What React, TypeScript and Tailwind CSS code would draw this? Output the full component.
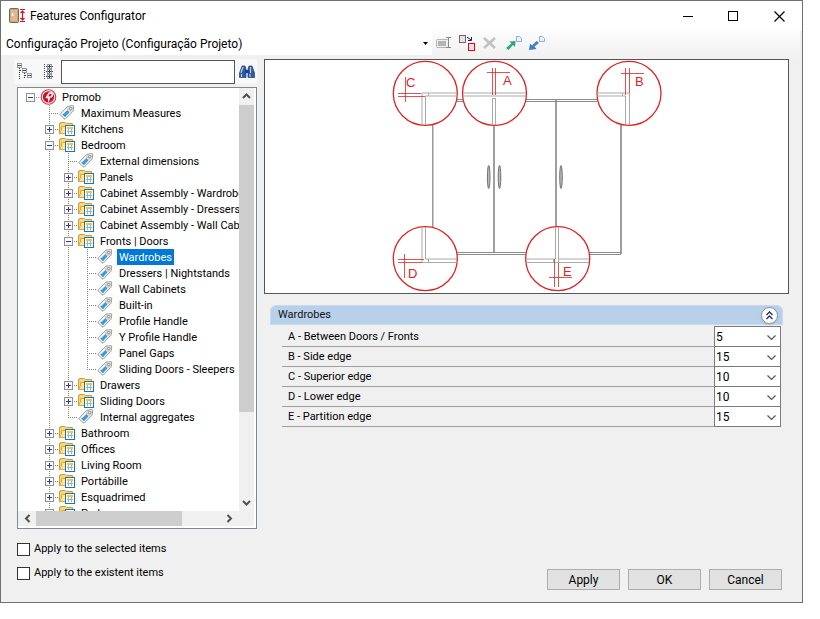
import { useState } from 'react';
import type { ReactNode } from 'react';

type NodeKind = 'root' | 'tag' | 'folder';

interface TreeRow {
  depth: number;
  label: string;
  kind: NodeKind;
  open?: boolean;
}

const rows: TreeRow[] = [
  { depth: 0, label: 'Promob', kind: 'root', open: true },
  { depth: 1, label: 'Maximum Measures', kind: 'tag' },
  { depth: 1, label: 'Kitchens', kind: 'folder' },
  { depth: 1, label: 'Bedroom', kind: 'folder', open: true },
  { depth: 2, label: 'External dimensions', kind: 'tag' },
  { depth: 2, label: 'Panels', kind: 'folder' },
  { depth: 2, label: 'Cabinet Assembly - Wardrobes', kind: 'folder' },
  { depth: 2, label: 'Cabinet Assembly - Dressers | Nightstands', kind: 'folder' },
  { depth: 2, label: 'Cabinet Assembly - Wall Cabinets', kind: 'folder' },
  { depth: 2, label: 'Fronts | Doors', kind: 'folder', open: true },
  { depth: 3, label: 'Wardrobes', kind: 'tag' },
  { depth: 3, label: 'Dressers | Nightstands', kind: 'tag' },
  { depth: 3, label: 'Wall Cabinets', kind: 'tag' },
  { depth: 3, label: 'Built-in', kind: 'tag' },
  { depth: 3, label: 'Profile Handle', kind: 'tag' },
  { depth: 3, label: 'Y Profile Handle', kind: 'tag' },
  { depth: 3, label: 'Panel Gaps', kind: 'tag' },
  { depth: 3, label: 'Sliding Doors - Sleepers', kind: 'tag' },
  { depth: 2, label: 'Drawers', kind: 'folder' },
  { depth: 2, label: 'Sliding Doors', kind: 'folder' },
  { depth: 2, label: 'Internal aggregates', kind: 'tag' },
  { depth: 1, label: 'Bathroom', kind: 'folder' },
  { depth: 1, label: 'Offices', kind: 'folder' },
  { depth: 1, label: 'Living Room', kind: 'folder' },
  { depth: 1, label: 'Portábille', kind: 'folder' },
  { depth: 1, label: 'Esquadrimed', kind: 'folder' },
  { depth: 1, label: 'Parks', kind: 'folder' },
  { depth: 1, label: 'Others', kind: 'folder' },
];

const features = [
  { id: 'a', label: 'A - Between Doors / Fronts', value: '5' },
  { id: 'b', label: 'B - Side edge', value: '15' },
  { id: 'c', label: 'C - Superior edge', value: '10' },
  { id: 'd', label: 'D - Lower edge', value: '10' },
  { id: 'e', label: 'E - Partition edge', value: '15' },
];

// True when another row at this depth follows before the branch closes
function continues(index: number, depth: number) {
  for (let i = index + 1; i < rows.length; i++) {
    if (rows[i].depth < depth) return false;
    if (rows[i].depth === depth) return true;
  }
  return false;
}

function Guide({ index, level }: { index: number; level: number }) {
  const row = rows[index];
  const own = row.depth === level;
  const more = continues(index, level);
  return (
    <svg width="19" height="16" className="shrink-0" shapeRendering="crispEdges">
      {level > 0 && (own || more) && (
        <path d={`M9.5 0V${more ? 16 : 8}`} stroke="#808080" strokeDasharray="1 1" />
      )}
      {own && <path d="M9 8.5H19" stroke="#808080" strokeDasharray="1 1" />}
      {own && row.kind !== 'tag' && (
        <>
          <rect x="5.5" y="4.5" width="8" height="8" fill="#f8f8f8" stroke="#919191" />
          <path d={row.open ? 'M7 8.5H12' : 'M7 8.5H12M9.5 6V11'} stroke="#2b3f8c" />
        </>
      )}
    </svg>
  );
}

function NodeIcon({ kind }: { kind: NodeKind }) {
  if (kind === 'root') {
    return (
      <svg width="20" height="16" className="shrink-0">
        <circle cx="8.5" cy="8" r="7.3" fill="#fff" stroke="#d8303e" strokeWidth="1.1" />
        <circle cx="8.5" cy="8" r="5.7" fill="#cf1228" />
        <path d="M8 14V9.5L5.5 9L7 6L8.5 3.5L12 3.2L13.3 6L12 8.5L10 8.5L9.6 11Z" fill="#fff" />
        <path d="M8.2 7.6L9.4 4.8L11.6 5L11 7.2Z" fill="#cf1228" />
      </svg>
    );
  }
  if (kind === 'tag') {
    return (
      <svg width="20" height="16" className="shrink-0">
        <path d="M.8 9.6L8.6 1.4L13.6 .6Q14.8 .5 14.7 1.8L14 6.2L6 14.3Z" fill="#fff" stroke="#949494" />
        <path d="M9 2.2L14 1.4L13.3 5.800L11.300 7.800L7.400 4Z" fill="#d2d2d2" />
        <path d="M7.800 5.400L10.300 7.800L6.200 12L3.700 9.600Z" fill="#3a9fdb" />
        <path d="M3.700 9.300L6.200 11.800M8 5.400L10.300 7.600" stroke="#1b689f" strokeWidth=".8" />
        <circle cx="11.700" cy="3.600" r="1.200" fill="#fff" stroke="#777" strokeWidth=".8" />
      </svg>
    );
  }
  return (
    <svg width="20" height="16" className="shrink-0">
      <path d="M.5 12.500V2.500H1.500V1.500H6.500L7.500 2.500H13.500V12.500Z" fill="#fbd777" stroke="#d79a32" />
      <path d="M.5 12.500L2.500 9V5.500H7.500L8.500 4.500H14.500V12.500Z" fill="#ffe699" stroke="#dfa63f" />
      <rect x="6.500" y="4.500" width="9" height="10" fill="#fff" stroke="#147ab5" />
      <rect x="8" y="6" width="6" height="2" fill="#f5c34a" />
      <path d="M8 10.500H14M9.500 8V13M12.500 8V13" stroke="#8db6de" />
    </svg>
  );
}

function ScrollArrow({ d, label }: { d: string; label: string }) {
  return (
    <button aria-label={label} className="flex size-[17px] shrink-0 items-center justify-center">
      <svg width="9" height="9" fill="none" stroke="#505050" strokeWidth="2">
        <path d={d} />
      </svg>
    </button>
  );
}

function FeatureTree() {
  const [selected, setSelected] = useState('Wardrobes');

  return (
    <div className="flex min-h-0 flex-1 flex-col border border-[#828790] bg-white">
      <div className="flex min-h-0 flex-1">
        <div className="min-w-0 flex-1 overflow-hidden pt-px pl-[3px]">
          {rows.map((row, i) => (
            <div key={i} className="flex h-4 items-center">
              {Array.from({ length: row.depth + 1 }, (_, level) => (
                <Guide key={level} index={i} level={level} />
              ))}
              <NodeIcon kind={row.kind} />
              <button
                onClick={() => setSelected(row.label)}
                className={`h-4 shrink-0 px-0.5 pt-0.5 leading-[14px] whitespace-nowrap ${
                  selected === row.label ? 'bg-[#0078d7] text-white' : ''
                }`}
              >
                {row.label}
              </button>
            </div>
          ))}
        </div>
        <div className="mr-0.5 flex w-[15px] flex-col items-center bg-[#f0f0f0]">
          <ScrollArrow label="Scroll up" d="M1 6L4.5 2.5L8 6" />
          <div className="flex w-full flex-1 flex-col">
            <div className="h-[79%] bg-[#cdcdcd]" />
          </div>
          <ScrollArrow label="Scroll down" d="M1 3L4.5 6.5L8 3" />
        </div>
      </div>
      {/* Horizontal scrollbar */}
      <div className="mr-0.5 mb-0.5 flex h-[15px] items-center bg-[#f0f0f0] pr-4 pl-px">
        <ScrollArrow label="Scroll left" d="M6.5 1L3 4.5L6.5 8" />
        <div className="flex h-full flex-1">
          <div className="w-[79%] bg-[#cdcdcd]" />
        </div>
        <ScrollArrow label="Scroll right" d="M2.5 1L6 4.5L2.5 8" />
      </div>
    </div>
  );
}

function ToolButton({ label, children }: { label: string; children: ReactNode }) {
  return (
    <button aria-label={label} className="flex h-6 w-[23px] items-center justify-center">
      <svg width="18" height="18" fill="none">
        {children}
      </svg>
    </button>
  );
}

function TitleBar() {
  return (
    <header className="flex h-[30px] shrink-0 items-center bg-white pl-2 text-xs">
      <svg width="17" height="16" className="mr-1">
        <rect x=".5" y=".5" width="9" height="14" rx="1" fill="#c9a67c" stroke="#806548" />
        <path d="M2 2H8V13H2Z" fill="#d8bb95" />
        <path d="M3.5 5V8" stroke="#fff" strokeWidth="1.5" />
        <path d="M11 1.5H16M11 13.5H16M13.5 3V12M11.500 5L13.500 3L15.500 5M11.500 10L13.500 12L15.500 10" fill="none" stroke="#d4141f" strokeWidth="1.200" />
      </svg>
      <h1 className="flex-1">Features Configurator</h1>
      <div className="flex">
        <button aria-label="Minimize" className="flex h-[30px] w-[46px] items-center justify-center">
          <svg width="11" height="11" shapeRendering="crispEdges"><path d="M0 5.5H10" stroke="#000" /></svg>
        </button>
        <button aria-label="Maximize" className="flex h-[30px] w-[45px] items-center justify-center">
          <svg width="11" height="11" shapeRendering="crispEdges"><path d="M.5 .5H9.5V9.5H.5Z" fill="none" stroke="#000" /></svg>
        </button>
        <button aria-label="Close" className="flex h-[30px] w-[46px] items-center justify-center">
          <svg width="11" height="11"><path d="M.5 .5L10.5 10.5M10.5 .5L.5 10.5" stroke="#000" strokeWidth="1.200" /></svg>
        </button>
      </div>
    </header>
  );
}

function ProjectBar() {
  return (
    <div className="flex h-7 shrink-0 items-start">
      <div className="relative h-6 min-w-0 flex-[0_1_431px] bg-white">
        <select
          aria-label="Project"
          className="h-6 w-full appearance-none bg-transparent pt-px pl-[5px] text-xs"
        >
          <option>Configuração Projeto (Configuração Projeto)</option>
        </select>
        <svg width="5" height="3" className="pointer-events-none absolute top-[11px] right-1">
          <path d="M0 0H5L2.5 3Z" />
        </svg>
      </div>
      <div className="mr-0.5 flex h-7 flex-1 bg-linear-to-b from-[#fcfcfc] to-[#f0f0f0]">
        <ToolButton label="Rename">
          <rect x="1.500" y="5.5" width="12" height="8" rx="1" fill="#eee" stroke="#b4b4b4" />
          <rect x="3" y="7" width="8" height="5" fill="#b4b4b4" />
          <path d="M11 3.5H16M13.500 3.5V13.5M11 13.5H16" stroke="#888" />
        </ToolButton>
        <ToolButton label="Replace">
          <rect x="1.5" y="1.5" width="6" height="7" fill="#e4e4e4" stroke="#74676c" />
          <rect x="10.5" y="9.5" width="6" height="7" fill="#e4e4e4" stroke="#f00" />
          <path d="M9 3L13 6M13.5 3V6.5H10" stroke="#1a1a70" />
        </ToolButton>
        <ToolButton label="Delete">
          <path d="M3 4L14 14M14 4L3 14" stroke="#c0c0c0" strokeWidth="2.4" />
        </ToolButton>
        <ToolButton label="Export">
          <path d="M2 14L7.500 9.500L5.500 7.500L11.500 7L11 13L9 11L4.500 16Z" fill="#30a381" />
          <path d="M12.500 2.500H15.500L17.500 4.500V7.500H12.500Z" fill="#eaf2ff" stroke="#8fb0e5" />
        </ToolButton>
        <ToolButton label="Import">
          <path d="M9.500 7L12 9L7.500 12.500L9.500 15L2 16L3 9.500L5 11.500Z" fill="#3b7fcc" />
          <path d="M12.500 2.500H15.500L17.500 4.500V7.500H12.500Z" fill="#eaf2ff" stroke="#8fb0e5" />
        </ToolButton>
      </div>
    </div>
  );
}

function SearchBar() {
  return (
    <div className="flex h-[25px] items-center bg-[#f8f8f8] pl-[3px]">
      <button aria-label="Collapse all" className="mr-[9px]">
        <svg width="17" height="17" fill="none" shapeRendering="crispEdges">
          <path d="M2.500 5V16M3 7.500H6M7.500 10V16M8 12.500H10" stroke="#333" strokeDasharray="1 1" />
          <path d="M.5 .500H4.500V4.500H.5ZM5.500 5.500H9.500V9.500H5.500ZM10.500 10.500H14.500V14.500H10.500Z" fill="#fff" stroke="#8b9aaa" />
          <path d="M1 2.500H4M6 7.500H9M11 12.500H14" stroke="#444" />
        </svg>
      </button>
      <button aria-label="Expand all" className="mr-[7px]">
        <svg width="11" height="17" fill="none" shapeRendering="crispEdges">
          <path d="M1.500 1V17M3 3.500H10M3 8.500H10M3 13.500H10" stroke="#444" strokeDasharray="1 1" />
          <path d="M4.500 1.500H8.500V5.500H4.500ZM4.500 6.500H8.500V10.500H4.500ZM4.500 11.500H8.500V15.500H4.500Z" fill="#fff" stroke="#8b9aaa" />
          <path d="M5 3.500H8M6.500 2V5M5 8.500H8M6.500 7V10M5 13.500H8M6.500 12V15" stroke="#444" />
        </svg>
      </button>
      <input aria-label="Search features" className="h-6 min-w-0 flex-1 border border-[#555] bg-white px-1 outline-none" />
      <button aria-label="Find" className="ml-1 mr-0.5">
        <svg width="16" height="14">
          <path d="M3 1H6L7 4V12.500H.5V8ZM10 1H13L15.500 8V12.500H9V4Z" fill="#31599f" stroke="#203f7d" strokeWidth=".7" />
          <path d="M6 5H10V8H6Z" fill="#203f7d" />
          <path d="M4 2L2 8M11.500 2V8M2.500 9V12M11 9V12" stroke="#b8cef0" strokeWidth="1.200" />
        </svg>
      </button>
    </div>
  );
}

// Cabinet front view with a magnified detail for each gap
function CabinetDrawing() {
  return (
    <svg viewBox="265 60 523 233" className="h-[233px] w-full" fill="none" role="img" aria-label="Wardrobe gaps">
      <g stroke="#8c8c8c">
        <path d="M457 99.500H597M457 101.500H597M457 252.500H621M457 254.500H621" />
        <path d="M432.500 125V227" stroke="#999" />
        <path d="M433.500 125V227" stroke="#ccc" />
        <path d="M494 100V253M556 100V227M621 125V254" stroke="#888" strokeWidth="1.600" />
      </g>
      <g fill="#bbb" stroke="#666" strokeWidth=".9">
        <ellipse cx="488.700" cy="177" rx="1.300" ry="11.500" />
        <ellipse cx="499.500" cy="177" rx="1.300" ry="11.500" />
        <ellipse cx="561" cy="177" rx="1.300" ry="11.500" />
      </g>
      <g fill="#fff" stroke="#e22222" strokeWidth="1.300">
        <circle cx="425.300" cy="93.300" r="32" />
        <circle cx="494.500" cy="93.300" r="32" />
        <circle cx="629" cy="93.300" r="32" />
        <circle cx="425.300" cy="258.700" r="32" />
        <circle cx="557.700" cy="258.700" r="32" />
      </g>
      <g stroke="#aaa">
        <path d="M457 93H422V125M457 96H425.500V125M428.500 93V96" />
        <path d="M463 93H526M463 96H526M492.500 98V125M495.500 98V125M492.500 98.500H495.500" />
        <path d="M597 93H629.500V125M597 96H625.500V125M622.500 93V96" />
        <path d="M422 227V262.500H457M425.500 227V259H457M428.500 259V262" />
        <path d="M526 259H555.500V227M589 259H558.500V227M526 262.500H589M553.500 259V262M558.500 259V262" />
      </g>
      <g stroke="#e22222" strokeWidth=".8">
        <path d="M405.500 77V102M398 93.500H421M398 96.500H425" />
        <path d="M492.500 68V95M495.500 68V95M487 72.500H510" />
        <path d="M625.500 68V95M629.500 68V93M621 73.500H644" />
        <path d="M404.500 254V278M398 259.500H424M398 262.500H422" />
        <path d="M554.500 259V287M558.500 263V287M549 277.500H572" />
      </g>
      <g fill="#e22222" className="font-['Liberation_Sans',sans-serif] text-[13px]">
        <text x="406" y="87">C</text>
        <text x="503" y="85">A</text>
        <text x="635" y="86">B</text>
        <text x="408" y="278">D</text>
        <text x="563" y="276">E</text>
      </g>
    </svg>
  );
}

function FeaturePanel() {
  return (
    <section className="mx-1.5 mt-[11px]">
      <div className="flex h-5 items-center justify-between rounded-t-md border border-[#c8daef] bg-[#b9d0eb] pr-1 pl-[7px]">
        <h2 className="text-[#111]">Wardrobes</h2>
        <button aria-label="Collapse" className="flex size-[17px] items-center justify-center rounded-full border border-[#8a93a8] bg-white shadow-sm">
          <svg width="9" height="9" fill="none" stroke="#1c2f6b" strokeWidth="1.300">
            <path d="M1.500 4L4.500 1L7.500 4M1.500 8L4.500 5L7.500 8" />
          </svg>
        </button>
      </div>
      <div className="mt-0.5 mr-0.5 ml-3">
        {features.map((f, i) => (
          <div key={f.id} className="flex h-5">
            <label htmlFor={f.id} className="flex flex-1 items-center border-b border-[#a0a0a0] pt-0.5 pl-1.5">
              {f.label}
            </label>
            <div className={`relative w-[67px] border-x border-b border-[#7a7a7a] bg-white ${i === 0 ? '-mt-px border-t' : ''}`}>
              <select id={f.id} defaultValue={f.value} className="block size-full appearance-none bg-transparent pl-px text-xs">
                <option>{f.value}</option>
              </select>
              <svg width="9" height="6" className="pointer-events-none absolute top-2 right-1" fill="none">
                <path d="M.5 .5L4.500 4.500L8.500 .5" stroke="#555" strokeWidth="1.200" />
              </svg>
            </div>
          </div>
        ))}
      </div>
    </section>
  );
}

function ApplyOption({ label }: { label: string }) {
  return (
    <label className="flex h-6 items-center gap-1">
      <input type="checkbox" className="size-[13px] appearance-none border border-[#333] bg-white checked:bg-[#0078d7]" />
      <span className="pt-px">{label}</span>
    </label>
  );
}

export default function App() {
  return (
    <div className="h-screen bg-white pr-[17px] pb-4 font-['Roboto',sans-serif] text-[11px] text-black">
      <main className="flex h-full flex-col overflow-hidden border border-[#707070] bg-[#f0f0f0]">
        <TitleBar />
        <ProjectBar />
        <div className="flex min-h-0 flex-1">
          <aside className="ml-3 flex w-[244px] shrink-0 flex-col pb-[17px]">
            <div className="mb-[3px] ml-px">
              <SearchBar />
            </div>
            <div className="ml-1 flex min-h-0 flex-1 flex-col">
              <FeatureTree />
              <div className="mt-2">
                <ApplyOption label="Apply to the selected items" />
                <ApplyOption label="Apply to the existent items" />
              </div>
            </div>
          </aside>
          <div className="mr-[13px] ml-[7px] flex min-w-0 flex-1 flex-col pb-3">
            <div className="border border-[#555] bg-white">
              <CabinetDrawing />
            </div>
            <FeaturePanel />
            <div className="mt-auto mr-[7px] flex justify-end gap-2">
              {['Apply', 'OK', 'Cancel'].map((text) => (
                <button key={text} className="h-[21px] w-[73px] border border-[#adadad] bg-[#e1e1e1] pt-px text-xs">
                  {text}
                </button>
              ))}
            </div>
          </div>
        </div>
      </main>
    </div>
  );
}
